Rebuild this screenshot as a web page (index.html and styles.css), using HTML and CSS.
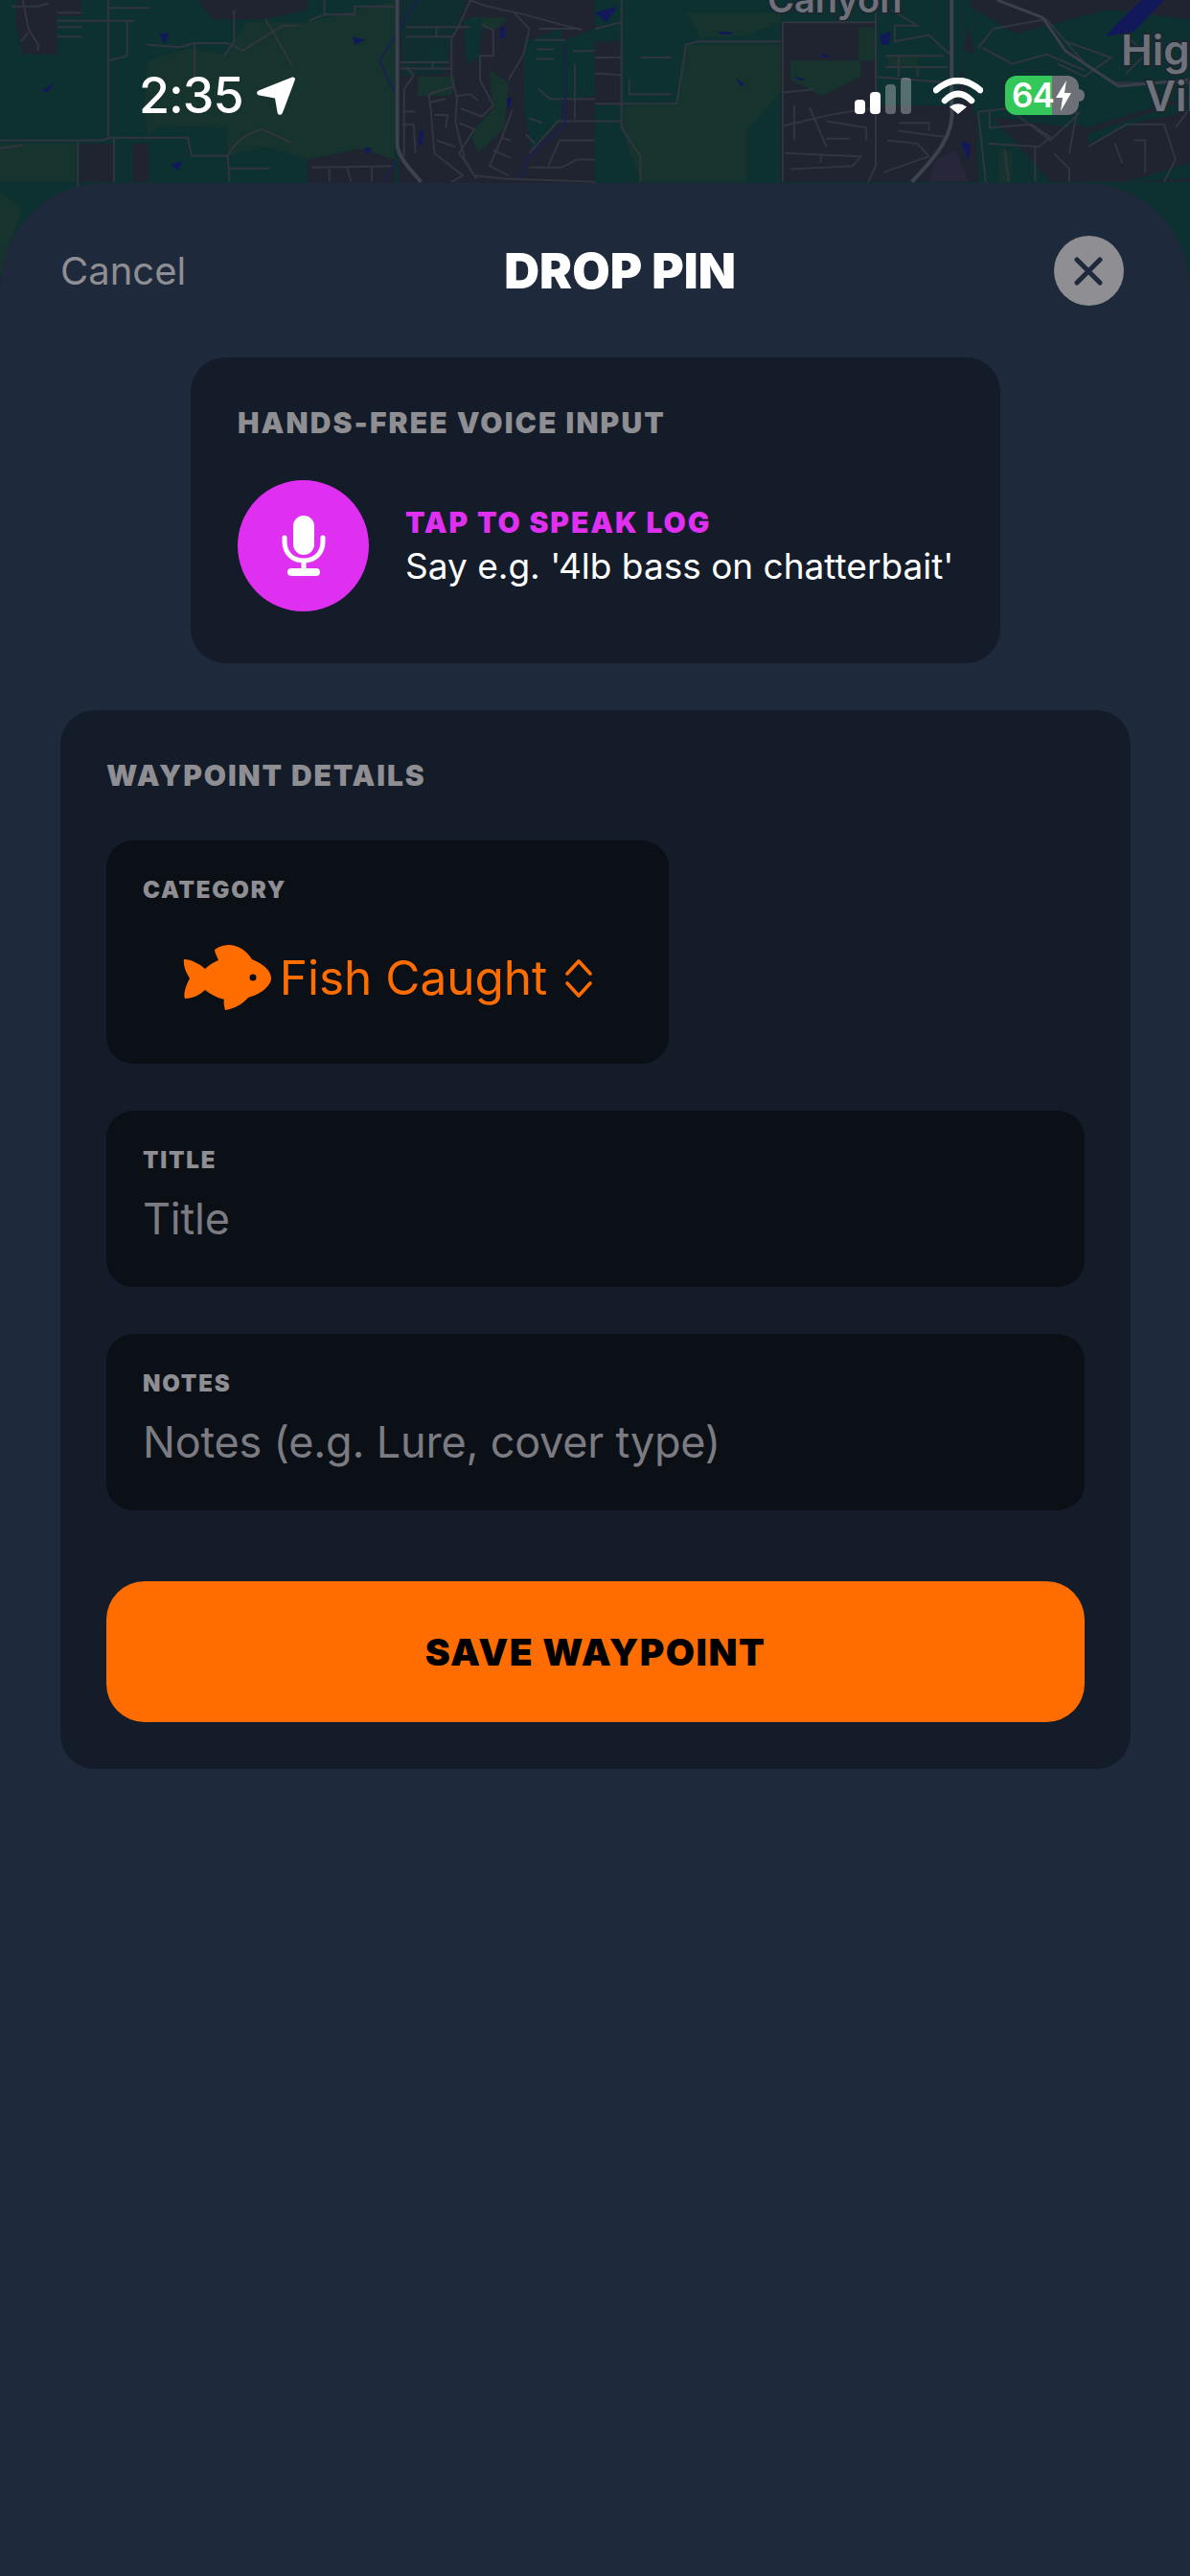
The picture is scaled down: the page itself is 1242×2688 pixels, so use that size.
FILE: index.html
```html
<!DOCTYPE html>
<html lang="en">
<head>
    <meta charset="UTF-8">
    <meta name="viewport" content="width=device-width, initial-scale=1.0">
    <title>Drop Pin</title>
    <link rel="stylesheet" href="styles.css">
</head>
<body>
    <!-- map that shows behind the sheet -->
    <svg class="map" width="1242" height="340" viewBox="0 0 1242 340" xmlns="http://www.w3.org/2000/svg">
        <rect width="1242" height="340" fill="#0d3030"/>
        <g transform="scale(.396 .333)">
            <g fill="#1f2430">
                <path d="M45 0H215V50H150V170H60L40 70Z"/>
                <path d="M520 0H810V30L700 60H560Z"/>
                <path d="M210 450H300V570H210Z"/>
                <path d="M350 450H390V570H350Z"/>
                <path d="M810 500L950 465L1040 480V580H810Z"/>
                <path d="M1050 0H1568V90L1480 130L1400 330L1568 300V580H1050Z"/>
                <path d="M0 860L10 870V1020H0Z"/>
            </g>
            <g fill="#16332e">
                <path d="M810 70L1040 0V500L950 465L810 500L700 460L600 490V400L420 395L390 430L380 330L390 190L500 150L590 170L650 70Z"/>
                <path d="M0 450H200V570H0Z"/>
                <path d="M0 600L60 650L0 860Z"/>
                <path d="M1100 240L1200 240L1190 300L1100 300Z"/>
                <path d="M1130 140H1170V190H1130Z"/>
                <path d="M1290 220L1340 260L1330 400L1260 480L1240 420L1300 340Z"/>
                <path d="M1240 55H1340L1310 90H1260Z"/>
            </g>
            <g fill="#0d3030">
                <path d="M1055 0H1230L1190 130L1170 230L1060 240Z" opacity=".8"/>
                <path d="M1220 60L1270 60L1265 180L1230 200Z"/>
                <path d="M1380 130L1480 90V380L1400 470L1380 330Z"/>
                <path d="M0 60H40V190H130L150 300L280 290V430H0Z"/>
                <path d="M520 500H600V570H520Z"/>
                <path d="M700 480L810 510V570H700Z"/>
            </g>
            <g fill="#11195a">
                <path d="M420 105L445 105L435 140Z"/>
                <path d="M930 115L965 125L935 140Z"/>
                <path d="M110 285L145 258L125 290Z"/>
                <path d="M450 515L480 505L470 535Z"/>
                <path d="M960 462L980 465L968 485Z"/>
                <path d="M1318 85L1332 85L1330 122L1318 118Z"/>
                <path d="M1105 415L1118 405L1112 455L1102 450Z"/>
                <path d="M1335 310L1350 305L1340 345Z"/>
            </g>
            <g fill="none" stroke="#31353f" stroke-width="2">
                <path vector-effect="non-scaling-stroke" d="M285 0V430M285 190L335 175V65M150 65H355M30 20H100L130 10M285 25H395M150 40H215M150 85H215M150 115H215M60 0L75 90L100 140V160M75 100L55 130"/>
                <path vector-effect="non-scaling-stroke" d="M0 440H270L290 432H495L505 488H600L605 570M205 445V590M300 435V570M600 490C620 440 650 420 690 405L765 445M605 528H710"/>
                <path vector-effect="non-scaling-stroke" d="M385 140L475 148L510 135H600L640 158L745 80H785M513 135V250M617 30V130L590 175M700 60L770 205M815 65L855 45V0M855 45H935V20H1040"/>
                <path vector-effect="non-scaling-stroke" d="M820 525L1040 520M868 525V570M915 525L925 570M980 525V570"/>
                <path vector-effect="non-scaling-stroke" d="M1070 85H1240M1070 115H1190M1150 85V115M1055 195H1185M1055 215H1190M1140 195V215M1070 210L1090 235L1065 280V490M1060 350H1095M1060 390H1090L1095 480M1130 295L1195 272M1130 295L1135 340L1145 480L1220 550L1190 570M1135 320L1175 310M1145 360H1180L1175 400M1150 440L1200 460M1210 385L1250 405L1210 480L1250 550"/>
                <path vector-effect="non-scaling-stroke" d="M1190 120C1210 90 1220 50 1240 0C1290 30 1340 30 1395 50L1535 95M1190 120V240L1205 310L1200 380L1225 500L1255 560M1270 75L1300 95L1300 175L1265 175V250L1300 330L1270 365L1215 340M1205 300L1240 295L1260 315M1355 40L1395 90L1380 170L1340 250M1420 90H1530M1410 125H1490M1415 155H1460M1415 185H1460M1350 345L1320 440L1290 520L1340 550M1300 470L1345 495M1320 430L1345 440M1510 160H1568M1515 200V375M1420 280L1450 310H1568M1395 370L1430 385M1385 420L1410 450M1395 480L1470 380H1568M1445 520L1475 440H1568M1395 525H1480L1520 500H1568M1250 550L1330 560L1568 570"/>
                <path vector-effect="non-scaling-stroke" d="M0 465L60 455"/>
            </g>
            <path d="M1000 190L1100 0M1000 190L1040 290M1010 570L1040 510M1490 140V390L1395 490L1370 560" fill="none" stroke="#1a2150" stroke-width="2" vector-effect="non-scaling-stroke"/>
            <path d="M1047 0V450C1047 490 1080 530 1110 570" fill="none" stroke="#3d424e" stroke-width="4" vector-effect="non-scaling-stroke"/>
        </g>
        <g transform="translate(621 0) scale(.396 .333)">
            <g fill="#1f2430">
                <path d="M490 70H740V330H950L990 0H1568V60L1350 30L1000 140L1010 570H490Z"/>
                <path d="M1000 300L1300 400L1568 300V570H1200Z"/>
                <path d="M0 130H70V330H0Z"/>
            </g>
            <g fill="#16332e">
                <path d="M80 330H215L240 140H490V290L400 410V570H120L70 400Z"/>
                <path d="M240 40H490V70L400 110L280 120Z"/>
                <path d="M515 190H700V240L600 300L515 250Z"/>
                <path d="M695 85H740V190H695Z"/>
                <path d="M770 170H850V210H770Z"/>
                <path d="M1065 470H1100V570H1065Z"/>
            </g>
            <g fill="#0d3030">
                <path d="M950 140L1200 300L1260 400L1000 360Z"/>
                <path d="M960 0L1060 70L1200 170L1000 160Z"/>
                <path d="M1400 570L1568 560V510L1430 560Z"/>
                <path d="M1300 450L1440 380L1568 350V310L1300 420Z"/>
            </g>
            <g fill="#11195a">
                <path d="M750 110L780 100L775 140H755Z"/>
                <path d="M600 165L620 180H600Z"/>
                <path d="M1370 80L1440 0H1500L1420 100L1345 115Z"/>
                <path d="M0 40L60 20L30 70Z"/>
                <path d="M325 100H360V108H330Z"/>
                <path d="M525 238L555 250L540 252Z"/>
                <path d="M370 245L395 265L385 270Z"/>
                <path d="M965 445L990 450L985 505Z"/>
            </g>
            <path d="M900 500L950 470L985 570H880Z" fill="#27263a"/>
            <g fill="none" stroke="#31353f" stroke-width="2">
                <path vector-effect="non-scaling-stroke" d="M70 0V400L120 490V570M0 90L70 70M0 180H70M0 230L70 235M0 325H215L240 140L270 130H490M0 380H70M90 250V295H200M120 180H200"/>
                <path vector-effect="non-scaling-stroke" d="M495 70V570M495 70H740M740 40V520L720 570M780 30L850 80H790V130L880 110L935 170M765 175H920M765 210H930M800 175V240M850 210V240M740 240L935 260M495 290L575 280M525 330V440M565 335L610 460M495 395L620 360L720 340L740 360M610 380L715 400V440M610 435H670M800 385H880V410M800 410L930 430M770 440L850 450L880 490L760 540M500 480L700 490L680 520L515 530M595 480V510"/>
                <path vector-effect="non-scaling-stroke" d="M1010 150L1050 90L1190 60L1240 130L1300 210L1370 260L1568 260M1020 150L1100 200L1190 170L1290 220M1240 130L1360 180L1290 240L1220 200M1400 110L1450 170L1400 230M1010 350L1030 570M1010 350L1090 340L1200 440L1280 350M1040 350V400L1150 390L1200 430L1170 460L1035 450M1210 480L1250 530V570M1160 460V570M1300 460L1400 390L1500 390L1530 500L1500 570M1370 450L1390 510M1420 440H1450V540M1530 400L1568 340M1080 470L1090 570M1270 350L1250 480"/>
            </g>
            <path d="M940 0V330C950 420 900 490 835 570" fill="none" stroke="#3d424e" stroke-width="4" vector-effect="non-scaling-stroke"/>
            <path d="M1060 0L1180 55L1240 160L1380 270L1568 250" fill="none" stroke="#3a3f4b" stroke-width="3" vector-effect="non-scaling-stroke"/>
        </g>
        <text class="map-label map-label-small" x="801" y="13">Canyon</text>
        <text class="map-label" x="1170" y="68">High</text>
        <text class="map-label" x="1195" y="116">Village</text>
    </svg>

    <div class="status-bar">
        <div class="status-left">
            <span class="time">2:35</span>
            <svg width="40" height="40" viewBox="0 0 40 40" xmlns="http://www.w3.org/2000/svg">
                <path d="M37 0.5C39 0 40.4 1.4 39.8 3.4L27 37.5C25.8 40.6 22.2 40.6 21.5 37.2L19 22.5L2.8 19.6C-0.6 19 -0.8 15.6 2.4 14.2Z" fill="#fff"/>
            </svg>
        </div>
        <div class="status-right">
            <div class="signal">
                <span class="bar bar-1"></span>
                <span class="bar bar-2"></span>
                <span class="bar bar-3 off"></span>
                <span class="bar bar-4 off"></span>
            </div>
            <svg class="wifi" width="52" height="38" viewBox="0 0 52 38" xmlns="http://www.w3.org/2000/svg">
                <path d="M3 13Q26 -7 49 13M12 24Q26 10 40 24" fill="none" stroke="#fff" stroke-width="6.5" stroke-linecap="round"/>
                <path d="M17 30.5Q26 24 35 30.5L26 38Z" fill="#fff"/>
            </svg>
            <div class="battery">
                <span class="battery-num">64</span>
                <svg width="18" height="32" viewBox="0 0 18 32" xmlns="http://www.w3.org/2000/svg">
                    <path d="M12 0L1 18H8L6 32L17 13H10Z" fill="#fff"/>
                </svg>
                <span class="battery-nub"></span>
            </div>
        </div>
    </div>

    <div class="sheet">
        <div class="sheet-header">
            <span class="cancel">Cancel</span>
            <h1>DROP PIN</h1>
            <div class="close-btn">
                <svg width="30" height="30" viewBox="0 0 30 30" xmlns="http://www.w3.org/2000/svg">
                    <path d="M3 3L27 27M27 3L3 27" stroke="#1e293b" stroke-width="5" stroke-linecap="round"/>
                </svg>
            </div>
        </div>

        <div class="voice-card">
            <h2 class="card-title">HANDS-FREE VOICE INPUT</h2>
            <div class="voice-row">
                <div class="mic-circle">
                    <svg width="46" height="63" viewBox="0 0 46 63" xmlns="http://www.w3.org/2000/svg">
                        <rect x="12" y="0" width="22" height="41" rx="11" fill="#fff"/>
                        <path d="M3 23V27C3 39 11 47 23 47C35 47 43 39 43 27V23M23 47V58" fill="none" stroke="#fff" stroke-width="5" stroke-linecap="round"/>
                        <rect x="6" y="55" width="34" height="8" rx="4" fill="#fff"/>
                    </svg>
                </div>
                <div class="voice-text">
                    <div class="voice-title">TAP TO SPEAK LOG</div>
                    <div class="voice-hint">Say e.g. '4lb bass on chatterbait'</div>
                </div>
            </div>
        </div>

        <div class="details-card">
            <h2 class="card-title">WAYPOINT DETAILS</h2>

            <div class="field field-category">
                <div class="field-label">CATEGORY</div>
                <div class="category-row">
                    <svg width="92" height="69" viewBox="0 0 92 69" xmlns="http://www.w3.org/2000/svg">
                        <path fill-rule="evenodd" fill="#ff6d00" d="M1 15C8 15 18 20 23 25C27 21 32 18 37 16C35 11 33 8 33 5C38 1 44 0 49 0C60 1 68 8 72 15C84 20 92 27 92 35C92 43 80 52 68 55C62 62 53 67 44 68C43 64 42 60 43 57C35 55 28 51 23 47C18 52 10 56 2 56C0 52 3 42 7 35C3 28 0 22 1 15ZM73 30.500A3.500 3.500 0 1 0 73 37.500A3.500 3.500 0 1 0 73 30.500Z"/>
                    </svg>
                    <span class="category-name">Fish Caught</span>
                    <svg width="28" height="40" viewBox="0 0 28 40" xmlns="http://www.w3.org/2000/svg">
                        <path d="M2 15L14 2L26 15M2 25L14 38L26 25" fill="none" stroke="#ff6d00" stroke-width="3.600" stroke-linecap="round" stroke-linejoin="round"/>
                    </svg>
                </div>
            </div>

            <div class="field">
                <div class="field-label">TITLE</div>
                <div class="field-value">Title</div>
            </div>

            <div class="field">
                <div class="field-label">NOTES</div>
                <div class="field-value">Notes (e.g. Lure, cover type)</div>
            </div>

            <button class="save-button">SAVE WAYPOINT</button>
        </div>
    </div>
</body>
</html>
```

FILE: styles.css
```css
html, body {
    margin: 0;
    padding: 0;
    height: 2688px;
    overflow: hidden;
    background-color: #1e293b;
    font-family: Inter, "Noto Sans", sans-serif;
}

h1, h2 {
    margin: 0;
}

.map {
    position: absolute;
    top: 0;
    left: 0;
}

.map-label {
    font-family: Inter, sans-serif;
    font-size: 44px;
    font-weight: 600;
    fill: #6d717a;
    stroke: #20242e;
    stroke-width: 3px;
    paint-order: stroke;
}

.map-label-small {
    font-size: 38px;
}

/* status bar */
.status-bar {
    position: relative;
    box-sizing: border-box;
    height: 191px;
    padding: 79px 116px 0 145px;
    display: flex;
    justify-content: space-between;
    align-items: flex-start;
}

.status-left {
    display: flex;
    align-items: center;
    gap: 14px;
    height: 41px;
}

.time {
    color: #fff;
    font-size: 52px;
    font-weight: 500;
    line-height: 41px;
    letter-spacing: -1px;
}

.status-right {
    display: flex;
    align-items: center;
    gap: 23px;
    height: 41px;
}

.signal {
    display: flex;
    align-items: flex-end;
    gap: 5px;
    height: 38px;
}

.bar {
    width: 11px;
    background-color: #fff;
    border-radius: 4px;
}

.bar.off {
    background-color: rgba(255, 255, 255, 0.3);
}

.bar-1 { height: 15px; }
.bar-2 { height: 23px; }
.bar-3 { height: 31px; }
.bar-4 { height: 38px; }

.battery {
    position: relative;
    box-sizing: border-box;
    width: 77px;
    height: 41px;
    padding-left: 7px;
    display: flex;
    align-items: center;
    gap: 1px;
    border-radius: 12px;
    background: linear-gradient(90deg, #34c759 64%, #6e7077 64%);
}

.battery-num {
    color: #fff;
    font-size: 35px;
    font-weight: 600;
    line-height: 41px;
    letter-spacing: -1px;
}

.battery-nub {
    position: absolute;
    right: -6px;
    top: 14px;
    width: 6px;
    height: 13px;
    border-radius: 0 6px 6px 0;
    background-color: #6e7077;
}

/* sheet */
.sheet {
    position: relative;
    height: 2497px;
    box-sizing: border-box;
    padding: 55px 62px 0 63px;
    background-color: #1e293b;
    border-radius: 110px 110px 0 0;
}

.sheet-header {
    display: flex;
    justify-content: space-between;
    align-items: center;
    padding-right: 7px;
}

.cancel {
    color: #8e8e93;
    font-size: 40px;
}

.sheet-header h1 {
    color: #fff;
    font-size: 51px;
    font-weight: 900;
    line-height: 56px;
}

.close-btn {
    width: 73px;
    height: 73px;
    border-radius: 50%;
    background-color: #8e8e93;
    display: flex;
    justify-content: center;
    align-items: center;
}

.voice-card {
    width: 845px;
    height: 319px;
    box-sizing: border-box;
    margin: 54px auto 0;
    padding: 53px 49px 0;
    border-radius: 36px;
    background-color: #141c29;
}

.card-title {
    color: #8e8e93;
    font-size: 30px;
    font-weight: 900;
    line-height: 30px;
    letter-spacing: 2.100px;
}

.voice-row {
    margin-top: 45px;
    display: flex;
    align-items: center;
    gap: 38px;
}

.mic-circle {
    width: 137px;
    height: 137px;
    flex: none;
    border-radius: 50%;
    background-color: #df2ff0;
    display: flex;
    justify-content: center;
    align-items: center;
}

.voice-text {
    padding-top: 6px;
    white-space: nowrap;
}

.voice-title {
    color: #df2ff0;
    font-size: 30px;
    font-weight: 900;
    line-height: 36px;
    letter-spacing: 1.900px;
}

.voice-hint {
    color: #fff;
    font-size: 37px;
    line-height: 56px;
}

.details-card {
    margin-top: 49px;
    padding: 49px 48px;
    display: flex;
    flex-direction: column;
    gap: 49px;
    border-radius: 36px;
    background-color: #141c29;
}

.details-card .card-title {
    line-height: 38px;
    letter-spacing: 1.900px;
}

.field {
    box-sizing: border-box;
    height: 184px;
    padding: 38px 38px 0;
    border-radius: 28px;
    background-color: #0b1017;
}

.field-category {
    width: 587px;
    height: 233px;
}

.field-label {
    color: #8e8e93;
    font-size: 24px;
    font-weight: 900;
    line-height: 28px;
    letter-spacing: 1.800px;
}

.field-value {
    margin-top: 20px;
    color: #7b7b81;
    font-size: 45px;
    line-height: 54px;
    letter-spacing: -0.2px;
}

.category-row {
    margin-top: 43px;
    display: flex;
    justify-content: center;
    align-items: center;
    gap: 9px;
}

.category-name {
    margin-right: 10px;
    color: #ff6d00;
    font-size: 49.500px;
    line-height: 69px;
}

.save-button {
    height: 147px;
    margin-top: 25px;
    padding-bottom: 2px;
    border: none;
    border-radius: 40px;
    background-color: #ff6d00;
    color: #000;
    font-family: Inter, sans-serif;
    font-size: 39px;
    font-weight: 900;
    letter-spacing: 1.500px;
}
```
